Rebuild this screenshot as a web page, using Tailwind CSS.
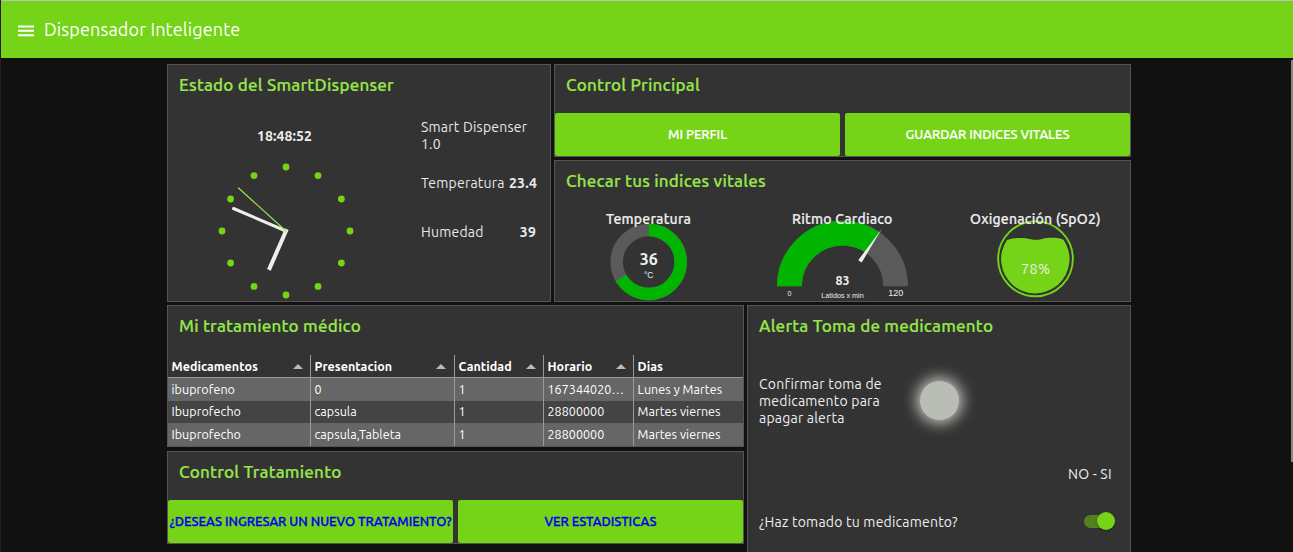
<!DOCTYPE html>
<html lang="es">
<head>
<meta charset="utf-8">
<title>Dispensador Inteligente</title>
<script src="https://cdn.jsdelivr.net/npm/@tailwindcss/browser@4"></script>
</head>
<body class="h-[552px] overflow-hidden bg-[#111] font-['Ubuntu','Noto_Sans',sans-serif] text-[14px] leading-[17px] tracking-[.21px] text-[#eee]">
<div class="relative flex h-[552px] flex-col overflow-hidden border-l border-[#2c1a2a]">
  <header class="flex h-[58px] shrink-0 items-center border-t border-[#bfbfbf] bg-[#75d318] pl-[17px] text-white">
    <svg class="mt-[3px] h-[12px] w-4" viewBox="0 0 16 12" fill="currentColor"><path d="M0 .4h16v2H0zM0 4.8h16v2H0zM0 9.2h16v2H0z"/></svg>
    <h1 class="mb-[2px] ml-[10px] text-[18px] leading-6 tracking-[.14px]">Dispensador Inteligente</h1>
  </header>
  <main class="ml-[166px] mt-[6px] flex w-[964px] flex-col gap-[3px] whitespace-nowrap">
    <div class="flex h-[238px] gap-[3px]">
      <section class="flex w-[384px] flex-col border border-[#555] bg-[#333]">
        <h2 class="pl-[11px] pt-[8px] text-[17px] font-medium leading-6 text-[#97e74a] [-webkit-text-stroke:0.2px]">Estado del SmartDispenser</h2>
        <div class="flex">
          <div class="flex w-[253px] flex-col pt-[31px]">
            <p class="ml-[89px] font-bold tracking-[.1px]">18:48:52</p>
            <svg class="ml-[48px] mt-[16px] h-[140px] w-[140px]" viewBox="-70 -70 140 140">
              <g fill="#75d318"><circle cy="-64" r="3.4"/><circle cx="32" cy="-55.4" r="3.4"/><circle cx="55.4" cy="-32" r="3.4"/><circle cx="64" r="3.4"/><circle cx="55.4" cy="32" r="3.4"/><circle cx="32" cy="55.4" r="3.4"/><circle cy="64" r="3.4"/><circle cx="-32" cy="55.4" r="3.4"/><circle cx="-55.4" cy="32" r="3.4"/><circle cx="-64" r="3.4"/><circle cx="-55.4" cy="-32" r="3.4"/><circle cx="-32" cy="-55.4" r="3.4"/></g>
              <g stroke-linecap="round"><path d="M0 0-16.3 37" stroke="#eee" stroke-width="4" stroke-linecap="square"/><path d="M0 0-52.5-22.5" stroke="#eee" stroke-width="3"/><path d="M0 0-47.5-43" stroke="#97e74a" stroke-width="1.2"/></g>
            </svg>
          </div>
          <div class="flex w-[116px] flex-col pt-[22px] text-[#e8e8e8]">
            <p>Smart Dispenser<br>1.0</p>
            <p class="mt-[22px] flex justify-between"><span>Temperatura</span><b>23.4</b></p>
            <p class="mt-[32px] flex justify-between pr-px"><span>Humedad</span><b>39</b></p>
          </div>
        </div>
      </section>
      <div class="flex w-[577px] flex-col gap-[3px]">
        <section class="flex h-[93px] flex-col border border-[#555] bg-[#333]">
          <h2 class="h-[48px] pl-[11px] pt-[8px] text-[17px] font-medium leading-6 text-[#97e74a] [-webkit-text-stroke:0.2px]">Control Principal</h2>
          <div class="flex h-[43px] gap-[5px] text-[13px] font-medium tracking-[-.03px] text-white [-webkit-text-stroke:0.2px]">
            <button class="flex-1 rounded-[2px] bg-[#75d318]">MI PERFIL</button>
            <button class="flex-1 rounded-[2px] bg-[#75d318]">GUARDAR INDICES VITALES</button>
          </div>
        </section>
        <section class="flex h-[142px] flex-col border border-[#555] bg-[#333]">
          <h2 class="pl-[11px] pt-[8px] text-[17px] font-medium leading-6 text-[#97e74a] [-webkit-text-stroke:0.2px]">Checar tus indices vitales</h2>
          <div class="relative mt-[18px] flex font-medium [-webkit-text-stroke:0.2px]">
            <p class="ml-[51px] w-[86px]">Temperatura</p>
            <p class="ml-[100px] w-[101px]">Ritmo Cardiaco</p>
            <p class="ml-[77px] w-[132px]">Oxigenación (SpO2)</p>
          </div>
          <svg class="-mt-[18px] h-[91px] w-[575px]" viewBox="555 210 575 91">
            <g fill="none" stroke-width="12.5"><circle cx="648.7" cy="262" r="32" stroke="#5a5a5a"/><circle cx="648.7" cy="262" r="32" stroke="#00b400" pathLength="360" stroke-dasharray="240 120" transform="rotate(-90 648.7 262)"/></g>
            <g fill="none" stroke-width="24.8"><path d="M789.4 286.2a53.1 53.1 0 0 1 106.2 0" stroke="#5a5a5a"/><path d="M789.4 286.2a53.1 53.1 0 0 1 106.2 0" stroke="#00b400" pathLength="120" stroke-dasharray="83 200"/></g>
            <path d="M858.2 260.2 882 228.5l-20.3 34z" fill="#eee"/>
            <circle cx="1035.5" cy="258.8" r="37.4" fill="none" stroke="#75d318" stroke-width="1.9"/>
            <path d="M1007 240c8-2.6 17-2.4 24-.8q5 1.2 10 0c8-1.9 17-2 22.5.6A34.2 34.2 0 1 1 1007 240z" fill="#75d318"/>
            <g fill="#eee" text-anchor="middle" letter-spacing="0">
              <text x="648.7" y="265" font-size="16" font-weight="700">36</text>
              <text x="648.7" y="278" font-size="8.5" font-family="Liberation Sans">°C</text>
              <text x="842.5" y="285" font-size="12.4" font-weight="700">83</text>
              <g font-family="Liberation Sans"><text x="789.5" y="296" font-size="7">0</text><text x="842.5" y="298" font-size="7.2">Latidos x min</text><text x="895.8" y="296" font-size="9">120</text></g>
              <text x="1035.8" y="274" font-size="14.4" letter-spacing=".5">78%</text>
            </g>
          </svg>
        </section>
      </div>
    </div>
    <div class="flex gap-[3px]">
      <div class="flex w-[577px] flex-col gap-[4px]">
        <section class="flex h-[142px] flex-col border border-[#555] bg-[#333]">
          <h2 class="h-[49px] pl-[11px] pt-[8px] text-[17px] font-medium leading-6 text-[#97e74a] [-webkit-text-stroke:0.2px]">Mi tratamiento médico</h2>
          <div class="grid grid-cols-[143px_144px_89px_90px_109px] grid-rows-[23px_23px_22px_23px] text-[12.5px] leading-[23px] tracking-[.05px] text-white *:overflow-hidden *:border-r *:border-[#999] *:pl-[3.5px] *:nth-[5n]:border-r-0 *:nth-[-n+5]:border-b *:nth-[-n+5]:font-bold">
            <div class="flex items-center justify-between pr-[7px]">Medicamentos<svg class="h-[5px] w-[10px]" viewBox="0 0 10 5" fill="#bbb"><path d="M5 0l5 5H0z"/></svg></div>
            <div class="flex items-center justify-between pr-[8px]">Presentacion<svg class="h-[5px] w-[10px]" viewBox="0 0 10 5" fill="#bbb"><path d="M5 0l5 5H0z"/></svg></div>
            <div class="flex items-center justify-between pr-[7px]">Cantidad<svg class="h-[5px] w-[10px]" viewBox="0 0 10 5" fill="#bbb"><path d="M5 0l5 5H0z"/></svg></div>
            <div class="flex items-center justify-between pr-[7px]">Horario<svg class="h-[5px] w-[10px]" viewBox="0 0 10 5" fill="#bbb"><path d="M5 0l5 5H0z"/></svg></div>
            <div>Dias</div>
            <div class="bg-[#666]">ibuprofeno</div><div class="bg-[#666]">0</div><div class="bg-[#666]">1</div><div class="bg-[#666]">167344020…</div><div class="bg-[#666]">Lunes y Martes</div>
            <div class="bg-[#444] leading-[21px]">Ibuprofecho</div><div class="bg-[#444] leading-[21px]">capsula</div><div class="bg-[#444] leading-[21px]">1</div><div class="bg-[#444] leading-[21px]">28800000</div><div class="bg-[#444] leading-[21px]">Martes viernes</div>
            <div class="bg-[#666]">Ibuprofecho</div><div class="bg-[#666]">capsula,Tableta</div><div class="bg-[#666]">1</div><div class="bg-[#666]">28800000</div><div class="bg-[#666]">Martes viernes</div>
          </div>
        </section>
        <section class="flex h-[93px] flex-col border border-[#555] bg-[#333]">
          <h2 class="h-[48px] pl-[11px] pt-[8px] text-[17px] font-medium leading-6 text-[#97e74a] [-webkit-text-stroke:0.2px]">Control Tratamiento</h2>
          <div class="flex h-[43px] gap-[5px] text-[13px] font-medium tracking-[-.04px] text-[#0000e8] [-webkit-text-stroke:0.3px]">
            <button class="w-[285px] rounded-[2px] bg-[#75d318]">¿DESEAS INGRESAR UN NUEVO TRATAMIENTO?</button>
            <button class="w-[285px] rounded-[2px] bg-[#75d318]">VER ESTADISTICAS</button>
          </div>
        </section>
      </div>
      <section class="flex h-[260px] w-[384px] flex-col border border-[#555] bg-[#333]">
        <h2 class="pl-[11px] pt-[8px] text-[17px] font-medium leading-6 text-[#97e74a] [-webkit-text-stroke:0.2px]">Alerta Toma de medicamento</h2>
        <div class="mt-[38px] flex items-start pl-[11px]">
          <p class="w-[160px]">Confirmar toma de<br>medicamento para<br>apagar alerta</p>
          <div class="mt-[4px] size-[41px] rounded-full border border-[#8a8c86] bg-[#b9bdb5] shadow-[0_0_14px_3px_#b9bdb5]"></div>
        </div>
        <p class="mt-[39px] pl-[320px]">NO - SI</p>
        <div class="mt-[31px] flex items-start pl-[11px]">
          <p class="w-[325px]">¿Haz tomado tu medicamento?</p>
          <div class="relative mt-px h-[13px] w-[30px] rounded-full bg-[#548024]"><div class="absolute -top-[3px] left-[13px] size-[18px] rounded-full bg-[#75d318] shadow-[0_1px_2px_rgba(0,0,0,.4)]"></div></div>
        </div>
      </section>
    </div>
  </main>
  <div class="absolute right-0 top-[60px] h-[402px] w-[2px] bg-[#888]"></div>
</div>
</body>
</html>
